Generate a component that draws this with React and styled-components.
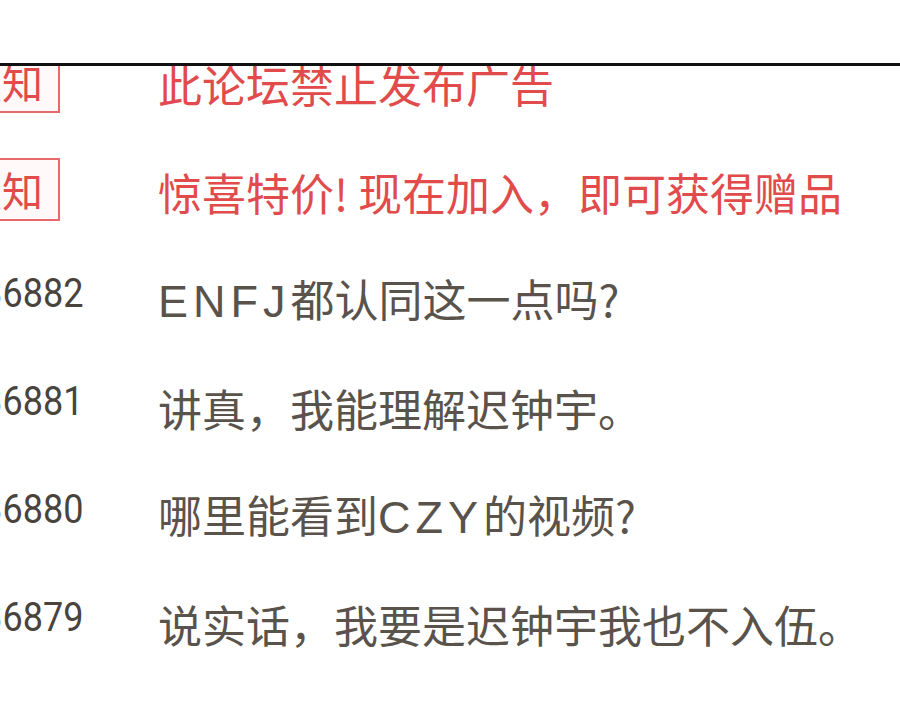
import React from 'react';
import styled, { createGlobalStyle } from 'styled-components';

const GlobalStyle = createGlobalStyle`
  html, body {
    margin: 0;
    padding: 0;
    background: #fff;
  }
  body {
    font-family: "Noto Sans CJK SC", "Noto Sans", sans-serif;
  }
`;

const Page = styled.div`
  width: 900px;
  height: 703px;
  overflow: hidden;
  background: #fff;
  display: flex;
  flex-direction: column;
`;

const Header = styled.div`
  height: 63px;
  flex: none;
  border-bottom: 3px solid #111;
  background: #fff;
`;

const List = styled.div`
  flex: 1;
  overflow: hidden;
  display: flex;
  flex-direction: column;
`;

const Row = styled.div`
  height: 108px;
  flex: none;
  display: flex;
  align-items: center;
  &:first-child {
    margin-top: -36px;
  }
`;

const Lead = styled.div`
  width: 83px;
  flex: none;
  display: flex;
  justify-content: flex-end;
  margin-right: 75px;
`;

const Badge = styled.span`
  display: inline-flex;
  align-items: center;
  justify-content: center;
  height: 59px;
  padding: 0 15px 0 12px;
  margin-right: 23px;
  margin-bottom: 6px;
  border: 2px solid #e66a6a;
  background: #fff9f9;
  color: #e04b4b;
  font-size: 41px;
  line-height: 1;
  white-space: nowrap;
`;

const Num = styled.span`
  display: inline-block;
  font-family: Roboto, "Liberation Sans", sans-serif;
  font-weight: 400;
  font-size: 40px;
  line-height: 1;
  color: #48433d;
  margin-bottom: 12px;
  transform: scaleX(0.9);
  transform-origin: right center;
  white-space: nowrap;
`;

const Title = styled.div`
  font-size: 44px;
  line-height: 1;
  white-space: nowrap;
  color: ${(p) => (p.$hot ? '#e14b4b' : '#59534b')};
`;

const Latin = styled.span`
  font-family: "Liberation Sans", Arial, sans-serif;
  font-size: 45px;
  letter-spacing: 5px;
`;

const rows = [
  { badge: '须知', hot: true, title: '此论坛禁止发布广告' },
  { badge: '须知', hot: true, title: '惊喜特价! 现在加入，即可获得赠品' },
  { num: '36882', title: <><Latin>ENFJ</Latin>都认同这一点吗?</> },
  { num: '36881', title: '讲真，我能理解迟钟宇。' },
  { num: '36880', title: <>哪里能看到<Latin>CZY</Latin>的视频?</> },
  { num: '36879', title: '说实话，我要是迟钟宇我也不入伍。' },
];

export default function App() {
  return (
    <>
      <GlobalStyle />
      <Page>
        <Header />
        <List>
          {rows.map((r, i) => (
            <Row key={i}>
              <Lead>
                {r.badge ? <Badge>{r.badge}</Badge> : <Num>{r.num}</Num>}
              </Lead>
              <Title $hot={r.hot}>{r.title}</Title>
            </Row>
          ))}
        </List>
      </Page>
    </>
  );
}
